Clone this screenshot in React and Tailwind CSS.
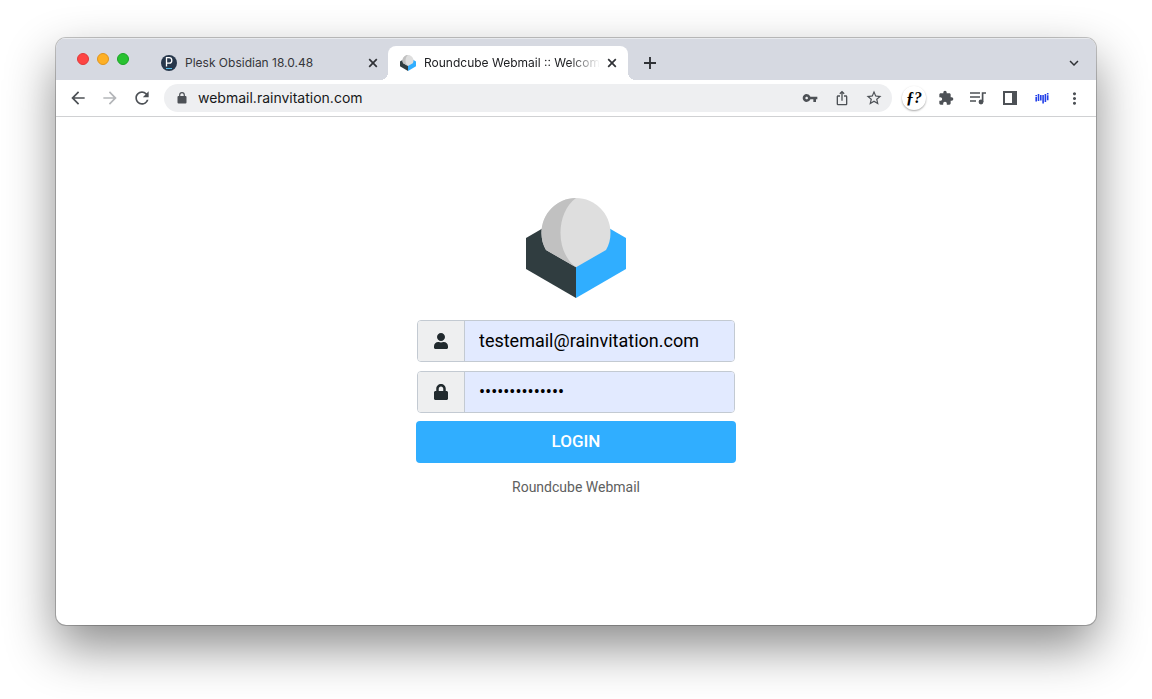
import React from "react";
import {
  MdArrowBack,
  MdArrowForward,
  MdRefresh,
  MdVpnKey,
  MdIosShare,
  MdStarBorder,
  MdExtension,
  MdMoreVert,
  MdKeyboardArrowDown,
} from "react-icons/md";
import { FaUser, FaLock } from "react-icons/fa";

function RoundcubeLogo({ className }) {
  return (
    <svg viewBox="0 0 100 100" className={className} aria-hidden="true">
      <path d="M50 11 0 40v31l50 29z" fill="#303d40" />
      <path d="m50 11 50 29v31l-50 29z" fill="#30aeff" />
      <path
        d="M50 0C31 0 15.500 15.500 15.500 35c0 6 1.500 12 4.500 17l30 17.300L80 52c3-5 4.500-11 4.500-17C84.500 15.500 69 0 50 0z"
        fill="#dedede"
      />
      <path
        d="M50 0C31 0 15.500 15.500 15.500 35c0 6 1.500 12 4.500 17l30 17.300C40 62 34.500 49 34.500 35S40 7 50 0z"
        fill="#c1c1c1"
      />
    </svg>
  );
}

function PleskIcon() {
  return (
    <svg viewBox="0 0 16 16" className="size-4 shrink-0" aria-hidden="true">
      <circle cx="8" cy="8" r="8" fill="#28384c" />
      <path d="M5.500 11.500V2.700h2.700a2.600 2.700 0 0 1 0 5.400H5.500" fill="none" stroke="#fff" strokeWidth="1.300" />
      <path d="M5 13.500h6" stroke="#53bce6" strokeWidth="1.200" />
    </svg>
  );
}

function CrossIcon() {
  return (
    <svg viewBox="0 0 10 10" className="size-[10px]" aria-hidden="true">
      <path d="m1.200 1.200 7.600 7.600M8.800 1.200 1.200 8.800" stroke="#303236" strokeWidth="1.700" />
    </svg>
  );
}

function PlusIcon() {
  return (
    <svg viewBox="0 0 12 12" className="size-3" aria-hidden="true">
      <path d="M6 0v12M0 6h12" stroke="#303236" strokeWidth="1.900" />
    </svg>
  );
}

function PadlockIcon() {
  return (
    <svg viewBox="0 0 10 12" className="h-3 w-[10px] shrink-0" aria-hidden="true">
      <rect x="0.500" y="4" width="9" height="7.500" rx="1" fill="#4d5156" />
      <path d="M2.700 4.500V3a2.300 2.300 0 0 1 4.600 0v1.500" fill="none" stroke="#4d5156" strokeWidth="1.200" />
    </svg>
  );
}

function MediaIcon() {
  return (
    <svg viewBox="0 0 16 14" className="h-[14px] w-4" aria-hidden="true">
      <path d="M0 2h10M0 6h10M0 10h6" stroke="#4d5156" strokeWidth="1.500" />
      <path d="M12.600 11V2H16" fill="none" stroke="#4d5156" strokeWidth="1.700" />
      <circle cx="11" cy="11" r="2.400" fill="#4d5156" />
    </svg>
  );
}

function SidePanelIcon() {
  return (
    <svg viewBox="0 0 14 14" className="size-[14px]" aria-hidden="true">
      <path d="M0 0h14v14H0zM2 2v10h7V2z" fill="#4d5156" fillRule="evenodd" />
    </svg>
  );
}

function WaveIcon() {
  return (
    <svg viewBox="0 0 14 12" className="h-3 w-[14px]" aria-hidden="true">
      <path
        d="M1.200 3v1.200M1.200 5v4.500M3.500 2v7M5.800 3v5.500M8.100 3v8.500M10.400 2v8M12.700 1v1.500M12.700 3.300v5"
        stroke="#2340e8"
        strokeWidth="1.600"
      />
    </svg>
  );
}

function Tab({ title, icon, active }) {
  return (
    <div
      className={
        active
          ? "relative flex w-60 shrink-0 items-center rounded-t-lg bg-white pr-2 pl-3"
          : "-mr-px flex w-60 shrink-0 items-center pr-2 pl-3"
      }
    >
      {active && (
        <>
          <span className="absolute bottom-0 -left-2 size-2 bg-[radial-gradient(circle_at_0_0,#d6d9e1_8px,#fff_8px)]" />
          <span className="absolute -right-2 bottom-0 size-2 bg-[radial-gradient(circle_at_100%_0,#d6d9e1_8px,#fff_8px)]" />
        </>
      )}
      {icon}
      <span
        className={
          active
            ? "ml-2 w-44 overflow-hidden text-xs whitespace-nowrap text-[#202124] [mask-image:linear-gradient(to_right,#000_82%,transparent)]"
            : "ml-2 w-44 overflow-hidden text-xs whitespace-nowrap text-[#35363a]"
        }
      >
        {title}
      </span>
      <button type="button" aria-label={"Close " + title} className="ml-1 flex size-4 items-center justify-center">
        <CrossIcon />
      </button>
    </div>
  );
}

function ToolButton({ label, children }) {
  return (
    <button type="button" aria-label={label} className="flex h-7 w-8 shrink-0 items-center justify-center text-[#4d5156]">
      {children}
    </button>
  );
}

function Field({ id, label, icon, type, value }) {
  return (
    <div className="mx-px flex h-[42px] overflow-hidden rounded border border-[#c3cad2]">
      <label
        htmlFor={id}
        aria-label={label}
        className="flex w-[47px] shrink-0 items-center justify-center border-r border-[#c3cad2] bg-[#eeeff0] text-[#212a2e]"
      >
        {icon}
      </label>
      <input
        id={id}
        type={type}
        defaultValue={value}
        className="min-w-0 flex-1 bg-[#e2eaff] px-[14px] text-lg text-black outline-none"
      />
    </div>
  );
}

export default function App() {
  return (
    <div className="flex min-h-screen flex-col bg-white px-14 pt-[38px] pb-[74px] font-['Roboto',sans-serif]">
      <div className="flex flex-1 flex-col overflow-hidden rounded-[10px] bg-white shadow-[0_0_0_1px_rgba(0,0,0,0.22),0_22px_50px_rgba(0,0,0,0.46)]">
        <header>
          <div className="flex h-[42px] bg-[#d6d9e1] pt-2 font-['Inter',sans-serif] shadow-[inset_0_1px_0_#e8eaee]">
            <div className="mr-5 ml-[21px] flex shrink-0 items-center gap-2 pb-2">
              <button type="button" aria-label="Close window" className="size-3 rounded-full border border-[#e0393a] bg-[#fe4543]" />
              <button type="button" aria-label="Minimize window" className="size-3 rounded-full border border-[#e0951d] bg-[#feb025]" />
              <button type="button" aria-label="Zoom window" className="size-3 rounded-full border border-[#1ba526] bg-[#29c231]" />
            </div>
            <Tab title="Plesk Obsidian 18.0.48" icon={<PleskIcon />} />
            <Tab title="Roundcube Webmail :: Welcom" icon={<RoundcubeLogo className="size-4 shrink-0" />} active />
            <button type="button" aria-label="New tab" className="ml-3 flex w-5 shrink-0 items-center justify-center">
              <PlusIcon />
            </button>
            <button type="button" aria-label="Search tabs" className="mr-3 ml-auto flex w-5 items-center justify-center">
              <MdKeyboardArrowDown className="size-[18px] text-[#303236]" />
            </button>
          </div>
          <div className="flex h-[37px] items-center border-b border-[#d0d1d3] px-[6px]">
            <ToolButton label="Back"><MdArrowBack className="size-5" /></ToolButton>
            <ToolButton label="Forward"><MdArrowForward className="size-5 text-[#b4b6b9]" /></ToolButton>
            <ToolButton label="Reload"><MdRefresh className="size-5" /></ToolButton>
            <div className="mx-[6px] flex h-7 min-w-0 flex-1 items-center rounded-full bg-[#eeeff1] pr-[2px] pl-[13px]">
              <PadlockIcon />
              <input
                type="text"
                aria-label="Address"
                defaultValue="webmail.rainvitation.com"
                className="ml-[11px] min-w-0 flex-1 bg-transparent font-['Inter',sans-serif] text-sm text-[#17181a] outline-none"
              />
              <ToolButton label="Passwords"><MdVpnKey className="size-4" /></ToolButton>
              <ToolButton label="Share"><MdIosShare className="size-4" /></ToolButton>
              <ToolButton label="Bookmark"><MdStarBorder className="size-[18px]" /></ToolButton>
            </div>
            <ToolButton label="Font finder">
              <span className="flex size-6 items-center justify-center rounded-full bg-white font-['Liberation_Serif',serif] text-base font-bold text-black italic shadow-[0_1px_2px_rgba(0,0,0,0.35)]">
                ƒ?
              </span>
            </ToolButton>
            <ToolButton label="Extensions"><MdExtension className="size-4" /></ToolButton>
            <ToolButton label="Media"><MediaIcon /></ToolButton>
            <ToolButton label="Side panel"><SidePanelIcon /></ToolButton>
            <ToolButton label="Voice"><WaveIcon /></ToolButton>
            <ToolButton label="Menu"><MdMoreVert className="size-[19px]" /></ToolButton>
          </div>
        </header>
        <main className="flex flex-1 flex-col items-center pt-[81px]">
          <RoundcubeLogo className="size-[100px]" />
          <form className="mt-[22px] flex w-80 flex-col" onSubmit={(e) => e.preventDefault()}>
            <div className="flex flex-col gap-[9px]">
              <Field id="user" label="Username" type="text" value="testemail@rainvitation.com" icon={<FaUser className="size-4" />} />
              <Field id="pass" label="Password" type="password" value="examplepass123" icon={<FaLock className="size-4" />} />
            </div>
            <button type="submit" className="mt-2 h-[42px] rounded bg-[#30aeff] text-[17px] font-medium text-white">
              LOGIN
            </button>
          </form>
          <p className="mt-[14px] text-sm leading-5 text-[#5e6060]">Roundcube Webmail</p>
        </main>
      </div>
    </div>
  );
}
